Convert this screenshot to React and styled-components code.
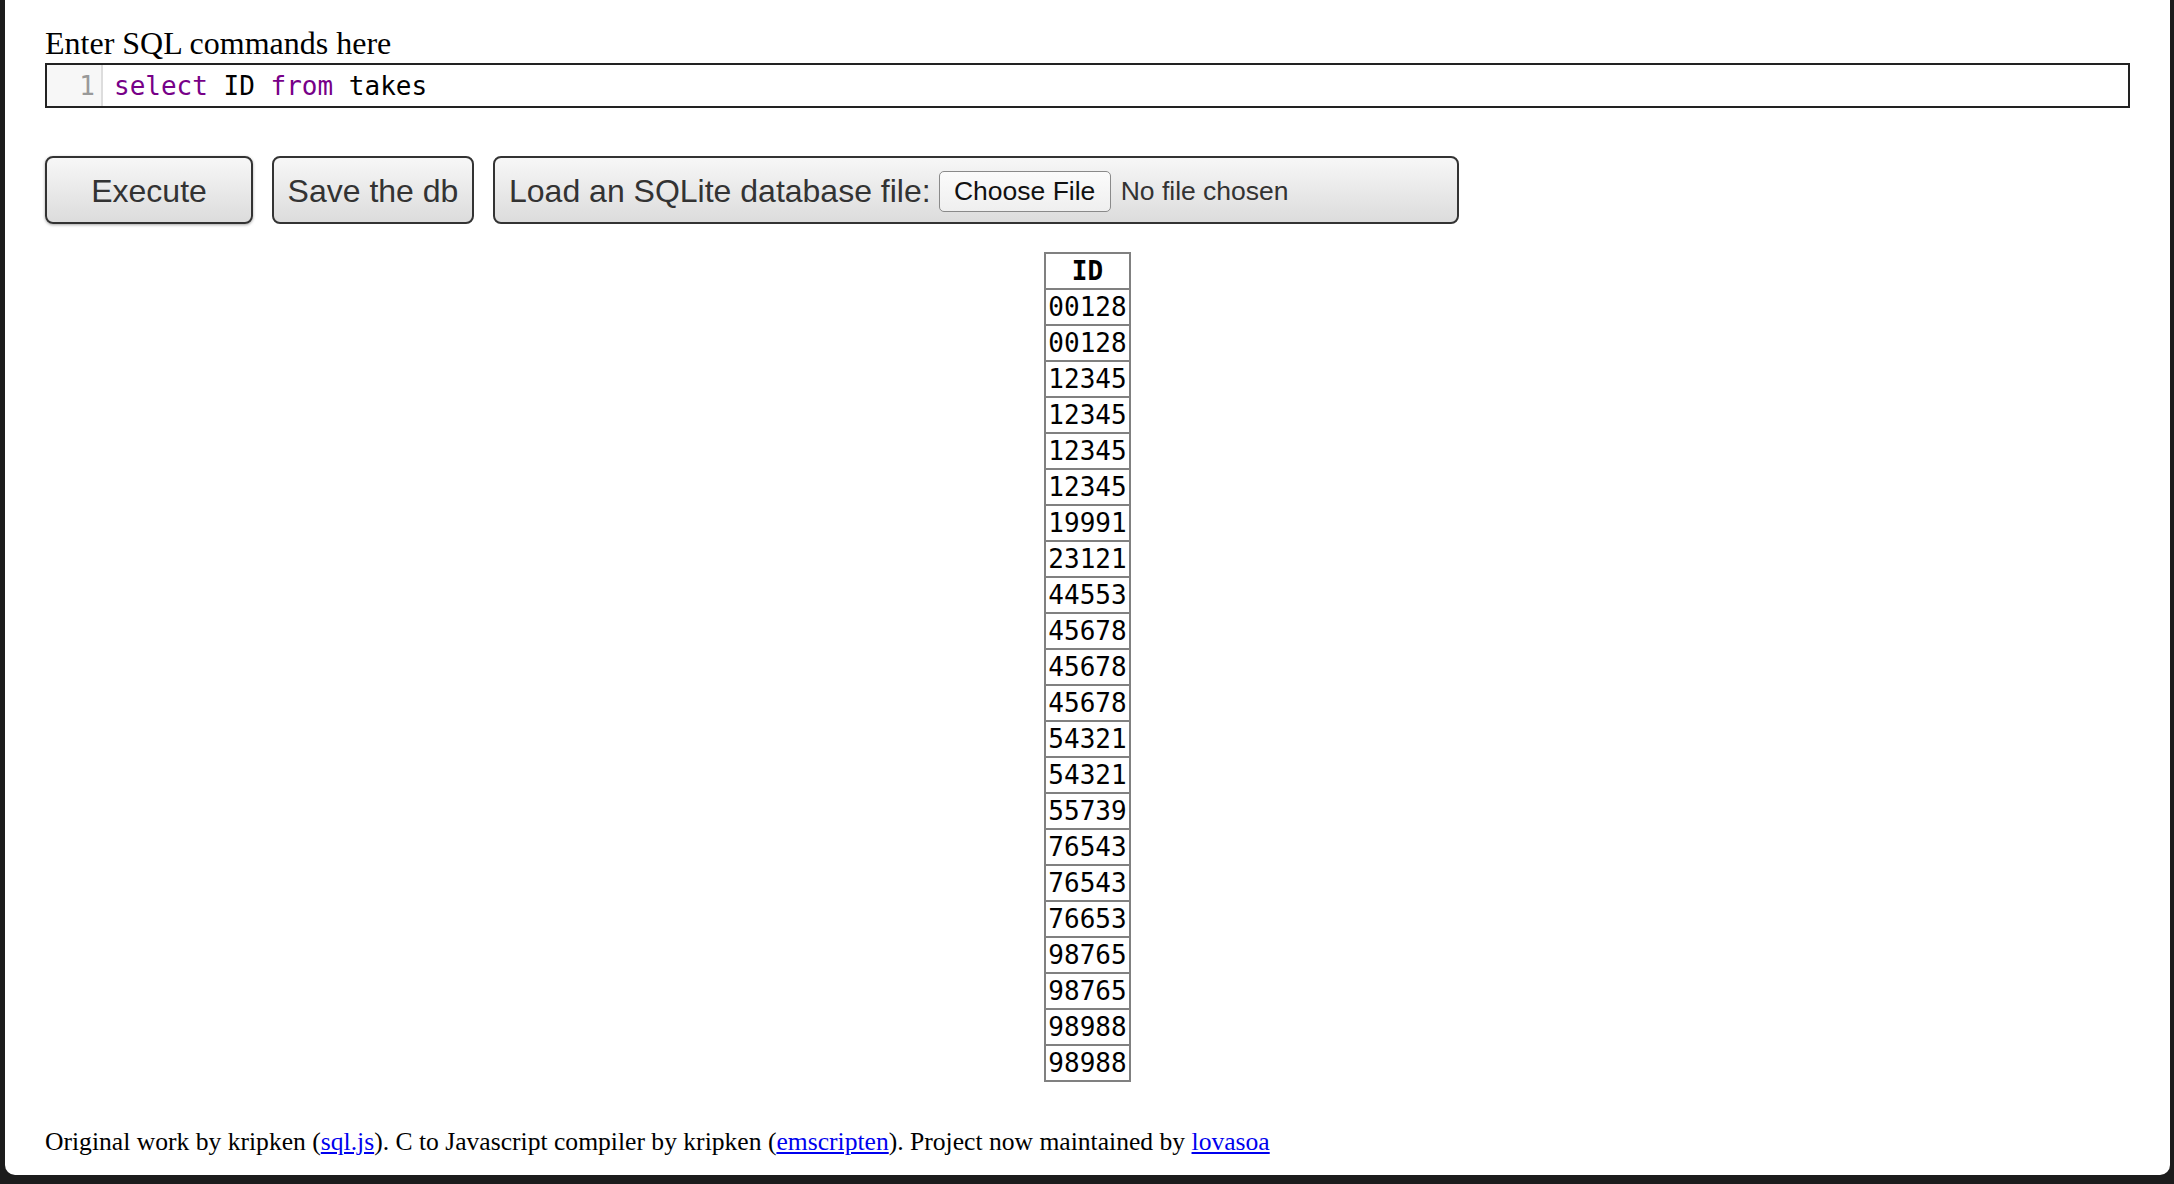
import React from "react";
import styled, { createGlobalStyle } from "styled-components";

const Global = createGlobalStyle`
  html, body { margin: 0; padding: 0; background: #1c1c1c; }
  #root { width: 2174px; height: 1184px; overflow: hidden; }
`;

const Page = styled.div`
  box-sizing: border-box;
  margin: 0 4px 0 5px;
  height: 1175px;
  background: #fff;
  border-radius: 0 0 10px 10px;
  padding: 0 40px;
  display: flex;
  flex-direction: column;
  font-family: "Liberation Serif", "Times New Roman", serif;
  color: #000;
`;

const Heading = styled.div`
  margin-top: 25px;
  font-size: 32px;
  line-height: 37px;
  height: 37px;
`;

const Editor = styled.div`
  box-sizing: border-box;
  margin-top: 1px;
  height: 45px;
  border: 2px solid #222;
  display: flex;
  align-items: stretch;
  font-family: "DejaVu Sans Mono", "Liberation Mono", monospace;
  font-size: 26px;
  line-height: 30px;
`;

const Gutter = styled.div`
  box-sizing: border-box;
  width: 56px;
  background: #f7f7f7;
  border-right: 2px solid #ddd;
  color: #999;
  text-align: right;
  padding-right: 6px;
  display: flex;
  align-items: center;
  justify-content: flex-end;
`;

const Code = styled.div`
  padding-left: 11px;
  display: flex;
  align-items: center;
  white-space: pre;
`;

const Kw = styled.span`
  color: #708;
`;

const Toolbar = styled.div`
  margin-top: 48px;
  display: flex;
  gap: 19px;
  height: 68px;
`;

const Button = styled.div`
  box-sizing: border-box;
  width: ${(p) => p.$w}px;
  height: 68px;
  border: 2px solid #333;
  border-radius: 8px;
  background: linear-gradient(#f7f7f7, #dcdcdc);
  box-shadow: ${(p) => (p.$shadow ? "0 1px 3px rgba(0,0,0,0.35)" : "none")};
  display: flex;
  align-items: center;
  justify-content: ${(p) => (p.$left ? "flex-start" : "center")};
  padding: ${(p) => (p.$left ? "2px 14px 0" : "2px 0 0")};
  font-family: "Liberation Sans", Arial, sans-serif;
  font-size: 32px;
  color: #333;
  white-space: nowrap;
`;

const FileButton = styled.div`
  box-sizing: border-box;
  margin-left: 8px;
  width: 172px;
  height: 41px;
  border: 1.5px solid #8a8a8a;
  border-radius: 5px;
  background: linear-gradient(#fbfbfb, #efefef);
  display: flex;
  align-items: center;
  justify-content: center;
  font-size: 26.5px;
  color: #111;
`;

const FileStatus = styled.span`
  margin-left: 10px;
  font-size: 26.5px;
  color: #333;
`;

const Table = styled.table`
  margin: 28px auto 0;
  border-collapse: collapse;
  font-family: "DejaVu Sans Mono", "Liberation Mono", monospace;
  font-size: 26px;
  line-height: 30px;
`;

const Th = styled.th`
  border: 2px solid #808080;
  padding: 2px;
  font-weight: bold;
  text-align: center;
`;

const Td = styled.td`
  border: 2px solid #808080;
  padding: 2px;
`;

const Footer = styled.div`
  margin-top: 45px;
  font-size: 25.6px;
  line-height: 29px;
`;

const Link = styled.a`
  color: #0000ee;
  text-decoration: underline;
`;

const ids = [
  "00128", "00128", "12345", "12345", "12345", "12345", "19991", "23121",
  "44553", "45678", "45678", "45678", "54321", "54321", "55739", "76543",
  "76543", "76653", "98765", "98765", "98988", "98988",
];

export default function App() {
  return (
    <>
      <Global />
      <Page>
        <Heading>Enter SQL commands here</Heading>
        <Editor>
          <Gutter>1</Gutter>
          <Code>
            <Kw>select</Kw> ID <Kw>from</Kw> takes
          </Code>
        </Editor>
        <Toolbar>
          <Button $w={208} $shadow>Execute</Button>
          <Button $w={202}>Save the db</Button>
          <Button $w={966} $left>
            Load an SQLite database file:
            <FileButton>Choose File</FileButton>
            <FileStatus>No file chosen</FileStatus>
          </Button>
        </Toolbar>
        <Table>
          <thead>
            <tr>
              <Th>ID</Th>
            </tr>
          </thead>
          <tbody>
            {ids.map((id, i) => (
              <tr key={i}>
                <Td>{id}</Td>
              </tr>
            ))}
          </tbody>
        </Table>
        <Footer>
          Original work by kripken (<Link href="#">sql.js</Link>). C to Javascript compiler by kripken (
          <Link href="#">emscripten</Link>). Project now maintained by <Link href="#">lovasoa</Link>
        </Footer>
      </Page>
    </>
  );
}
